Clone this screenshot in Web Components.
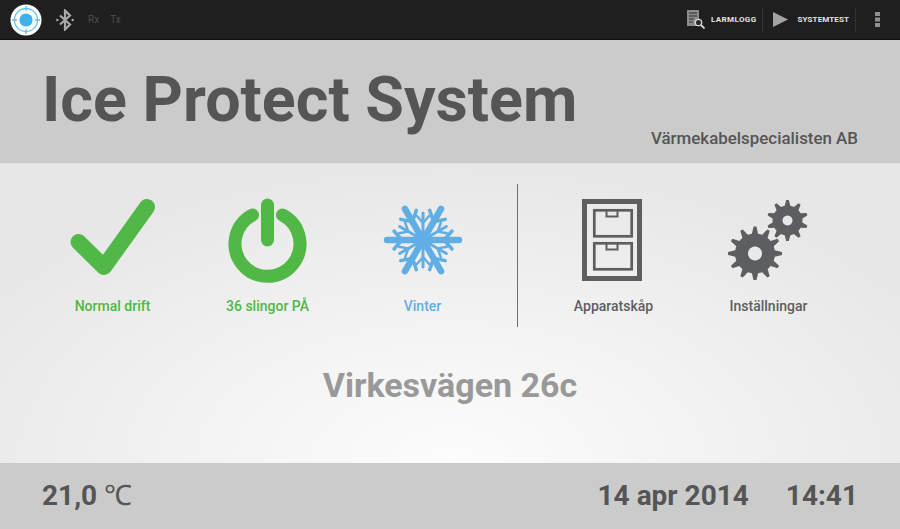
<!DOCTYPE html>
<html lang="sv">
<head>
<meta charset="utf-8">
<title>Ice Protect System</title>
<style>
html,body{margin:0;padding:0;height:100%;overflow:hidden}
body{font-family:Roboto,"Liberation Sans",sans-serif;background:#ccc}
ice-app{height:529px}
</style>
</head>
<body>
<ice-app></ice-app>

<script>
// small helper so every element gets its own open shadow root
class Base extends HTMLElement{
    constructor(){
        super();
        this.attachShadow({mode:'open'});
    }
    connectedCallback(){
        this.shadowRoot.innerHTML = `<style>${this.styles()}</style>${this.markup()}`;
    }
    styles(){return ':host{display:block}';}
    markup(){return '<slot></slot>';}
}

class TopAction extends Base{
    styles(){return `
        :host{display:flex;align-items:center;height:24px;font-size:8px;font-weight:700;color:#e4e4e4;letter-spacing:.1px;white-space:nowrap}
        :host([divided]){border-right:1px solid #333}
        ::slotted(svg){display:block;flex:none}
    `;}
}

class TopBar extends Base{
    styles(){return `
        :host{display:flex;align-items:center;height:39px;background:#1f1f1f;border-bottom:1px solid #0d0d0d;flex:none}
        .rx{font-size:10px;color:#505050}
        .logo{margin-left:10px}
        .bt{margin-left:14px}
        .rx.a{margin-left:14px}
        .rx.b{margin-left:11px}
        .right{margin-left:auto;display:flex;align-items:center}
        .log{padding-right:5px;margin-right:10px;letter-spacing:.4px}
        .log svg{margin-right:6px}
        .test{padding-right:6px}
        .test svg{margin-right:10px}
        .more{margin:0 20px 0 19px;display:block}
    `;}
    markup(){return `
        <svg class="logo" width="32" height="32" viewBox="0 0 32 32">
            <circle cx="16" cy="16" r="15.5" fill="#fff"/>
            <circle cx="16" cy="16" r="11.500" fill="none" stroke="#62c2f0" stroke-width="1.300"/>
            <circle cx="16" cy="16" r="6.600" fill="#3fb2ee"/>
            <path d="M16 2v5M16 25v5M2 16h5M25 16h5" stroke="#62c2f0" stroke-width="1.300"/>
        </svg>
        <svg class="bt" width="18" height="22" viewBox="0 0 18 22">
            <path d="M4 6.5l10 9-5 5V1.500l5 5-10 9" fill="none" stroke="#a9a9a9" stroke-width="2.200"/>
            <path d="M0.500 9.500l2.500 1.500-2.500 1.500zM17.500 9.500l-2.500 1.500 2.500 1.500z" fill="#d0d0d0"/>
        </svg>
        <span class="rx a">Rx</span><span class="rx b">Tx</span>
        <div class="right">
            <top-action class="log" divided>
                <svg width="18" height="19" viewBox="0 0 18 19">
                    <path d="M0 0h12v16H0z" fill="#8c8c8c"/>
                    <path d="M2 3h8M2 6h8M2 9h5M2 12h4" stroke="#2a2a2a" stroke-width="1"/>
                    <circle cx="11.500" cy="12.500" r="3.200" fill="#2a2a2a" stroke="#d8d8d8" stroke-width="1.300"/>
                    <path d="M14 15l3.500 3.500" stroke="#d8d8d8" stroke-width="1.800"/>
                </svg>
                LARMLOGG
            </top-action>
            <top-action class="test" divided>
                <svg width="15" height="15" viewBox="0 0 15 15"><path d="M0 0l15 7.500L0 15z" fill="#a3a3a3"/></svg>
                SYSTEMTEST
            </top-action>
            <svg class="more" width="5" height="15" viewBox="0 0 5 15" fill="#8f8f8f">
                <rect x="0" y="0" width="5" height="4"/><rect x="0" y="5.500" width="5" height="4"/><rect x="0" y="11" width="5" height="4"/>
            </svg>
        </div>
    `;}
}

class AppHeader extends Base{
    styles(){return `
        :host{display:flex;align-items:flex-end;justify-content:space-between;height:123px;box-sizing:border-box;background:#cbcbcb;color:#555;padding:0 42px 15px 42px;flex:none}
        h1{margin:0 0 11px;font-size:62.8px;line-height:75px;font-weight:700}
        .sub{font-size:16.9px;font-weight:500;line-height:19px;color:#555}
    `;}
    markup(){return `<h1>Ice Protect System</h1><div class="sub">Värmekabelspecialisten AB</div>`;}
}

class StatusItem extends Base{
    styles(){return `
        :host{display:flex;flex-direction:column;align-items:center;width:155px;flex:none;padding-top:12px;color:var(--c,#5d5e60)}
        .ic{height:88px;display:flex;align-items:center;justify-content:center}
        .lb{margin-top:14px;font-size:14px;line-height:17px;font-weight:500;white-space:nowrap}
        ::slotted(svg){display:block}
    `;}
    markup(){return `<div class="ic"><slot></slot></div><div class="lb">${this.getAttribute('label')}</div>`;}
}

// dibuja el engranaje con dientes anchos en la base
function gearPath(cx,cy,rOut,rIn,teeth){
    let d='';
    const step=Math.PI*2/teeth;
    for(let i=0;i<teeth;i++){
        const a=i*step-Math.PI/2;
        const pts=[[rIn,a-step*.5],[rIn,a-step*.3],[rOut,a-step*.1],[rOut,a+step*.1],[rIn,a+step*.3]];
        pts.forEach(([r,t],k)=>{
            const x=(cx+r*Math.cos(t)).toFixed(2), y=(cy+r*Math.sin(t)).toFixed(2);
            d+=(i===0&&k===0?'M':'L')+x+' '+y;
        });
    }
    return d+'Z';
}

function flakeMain(){
    return `
        <path d="M0 0V-36" stroke-width="6.500"/>
        <path d="M0 -21L-9 -29M0 -21L9 -29" stroke-width="3.500"/>
    `;
}
function flakeSmall(){
    return `
        <path d="M0 0V-27" stroke-width="3"/>
        <path d="M0 -17L-6 -24M0 -17L6 -24" stroke-width="2.500"/>
    `;
}

class MainPanel extends Base{
    styles(){return `
        :host{display:flex;flex-direction:column;flex:1;min-height:0;background:radial-gradient(ellipse 560px 300px at 450px 295px,#fcfcfc 0%,#f3f3f3 45%,#e7e7e7 100%);border-top:1px solid #e4e4e4}
        .row{display:flex;align-items:flex-start;padding:20px 0 0 35px;height:143px}
        .rule{width:1px;height:143px;background:#6f6f6f;margin:0 18px 0 17px;flex:none}
        .place{margin-top:38px;text-align:center;font-size:34px;line-height:40px;font-weight:700;color:#999}
    `;}
    markup(){
        const big=[30,90,150,210,270,330].map(a=>`<g transform="rotate(${a})">${flakeMain()}</g>`).join('');
        const small=[0,60,120,180,240,300].map(a=>`<g transform="rotate(${a})">${flakeSmall()}</g>`).join('');
        return `
        <div class="row">
            <status-item label="Normal drift" style="--c:#4fb848">
                <svg width="88" height="88" viewBox="0 0 88 88"><path d="M9.500 46L35 71L78 11" fill="none" stroke="#51b848" stroke-width="16" stroke-linecap="round" stroke-linejoin="round"/></svg>
            </status-item>
            <status-item label="36 slingor PÅ" style="--c:#4fb848">
                <svg width="88" height="88" viewBox="0 0 88 88" fill="none" stroke="#51b848" stroke-linecap="round">
                    <path d="M28.500 19A32.500 32.500 0 1 0 58.500 19" stroke-width="13"/>
                    <path d="M43.500 9V44" stroke-width="13"/>
                </svg>
            </status-item>
            <status-item label="Vinter" style="--c:#61aee5">
                <svg width="88" height="88" viewBox="-44 -44 88 88" fill="none" stroke="#61aee5" stroke-linecap="round">${small}${big}<circle r="9" fill="#61aee5" stroke="none"/></svg>
            </status-item>
            <div class="rule"></div>
            <status-item label="Apparatskåp">
                <svg style="margin-right:3px" width="60" height="82" viewBox="0 0 60 82" fill="none" stroke="#5d5e60">
                    <rect x="2.500" y="2.500" width="55" height="77" stroke-width="5"/>
                    <rect x="12.300" y="11.300" width="37.400" height="26" stroke-width="2.700"/>
                    <rect x="12.300" y="44.300" width="37.400" height="26" stroke-width="2.700"/>
                    <path d="M24.500 11v6.500h11V11M24.500 44v6.500h11V44" stroke-width="2"/>
                </svg>
            </status-item>
            <status-item label="Inställningar">
                <svg style="margin-right:1px" width="80" height="80" viewBox="0 0 80 80">
                    <path fill="#5d5e60" fill-rule="evenodd" d="${gearPath(27,53.500,27,20,12)}M27 46.500a7 7 0 1 0 .01 0Z"/>
                    <path fill="#5d5e60" fill-rule="evenodd" d="${gearPath(59.500,20.500,20.500,15,10)}M59.500 15.500a5 5 0 1 0 .01 0Z"/>
                </svg>
            </status-item>
        </div>
        <div class="place">Virkesvägen 26c</div>
        `;
    }
}

class AppFooter extends Base{
    styles(){return `
        :host{display:flex;align-items:center;height:66px;flex:none;background:#cbcbcb;color:#555;padding:0 42px 0 42px;font-size:28px;font-weight:700;line-height:32px;white-space:nowrap}
        .unit{font-weight:300;margin-left:7px}
        .date{margin-left:auto}
        .time{margin-left:37px}
    `;}
    markup(){return `<span>21,0</span><span class="unit">℃</span><span class="date">14 apr 2014</span><span class="time">14:41</span>`;}
}

class IceApp extends Base{
    styles(){return `:host{display:flex;flex-direction:column;width:900px}`;}
    markup(){return `<top-bar></top-bar><app-header></app-header><main-panel></main-panel><app-footer></app-footer>`;}
}

customElements.define('top-action',TopAction);
customElements.define('top-bar',TopBar);
customElements.define('app-header',AppHeader);
customElements.define('status-item',StatusItem);
customElements.define('main-panel',MainPanel);
customElements.define('app-footer',AppFooter);
customElements.define('ice-app',IceApp);
</script>
</body>
</html>
